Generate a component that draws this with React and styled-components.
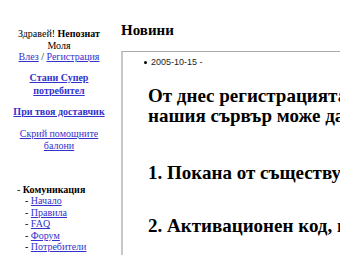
import React from "react";
import styled, { createGlobalStyle } from "styled-components";

const Global = createGlobalStyle`
  body {
    margin: 0;
    background: #fff;
    font-family: "Liberation Serif", "Times New Roman", serif;
    color: #000;
    overflow: hidden;
  }
`;

const Page = styled.div`
  display: flex;
  align-items: flex-start;
  width: 340px;
  height: 255px;
  overflow: hidden;
`;

const Side = styled.div`
  flex: 0 0 118px;
  padding-top: 28px;
  font-size: 10px;
  line-height: 11.5px;
  text-align: center;
`;

const Block = styled.div`
  margin-bottom: ${(p) => p.gap || 0}px;
  line-height: ${(p) => p.lh || 11.5}px;
`;

const Link = styled.a`
  color: #3333cc;
  text-decoration: underline;
  font-weight: ${(p) => (p.bold ? "bold" : "normal")};
`;

const Menu = styled.ul`
  list-style: none;
  margin: 33px 0 0 17px;
  padding: 0;
  text-align: left;
  line-height: 11.4px;
  li ul {
    list-style: none;
    margin: 0 0 0 8px;
    padding: 0;
  }
`;

const Main = styled.div`
  flex: 1;
  min-width: 0;
  padding: 22px 0 0 3px;
`;

const Title = styled.h1`
  margin: 0 0 13px 0;
  font-size: 15px;
  line-height: 16px;
  font-weight: bold;
`;

const Box = styled.div`
  border-top: 1px solid #aaa;
  border-left: 2px solid #c8c8c8;
  padding: 4px 0 0 21px;
  width: 400px;
  height: 220px;
`;

const NewsItem = styled.div`
  display: flex;
  align-items: center;
  gap: 4px;
  font-family: "Liberation Sans", Arial, sans-serif;
  font-size: 9px;
  line-height: 12px;
  color: #222;
  &::before {
    content: "";
    width: 3px;
    height: 3px;
    border-radius: 50%;
    background: #000;
  }
`;

const Heading = styled.h2`
  margin: ${(p) => p.top}px 0 0 4px;
  font-size: 19px;
  line-height: 20px;
  font-weight: bold;
  white-space: nowrap;
`;

export default function App() {
  return (
    <>
      <Global />
      <Page>
        <Side>
          <Block gap={8}>
            Здравей! <b>Непознат</b>
            <br />
            Моля
            <br />
            <Link href="#">Влез</Link> / <Link href="#">Регистрация</Link>
          </Block>
          <Block gap={9} lh={13}>
            <Link href="#" bold>
              Стани Супер
              <br />
              потребител
            </Link>
          </Block>
          <Block gap={11}>
            <Link href="#" bold>
              При твоя доставчик
            </Link>
          </Block>
          <Block>
            <Link href="#">
              Скрий помощните
              <br />
              балони
            </Link>
          </Block>
          <Menu>
            <li>
              - <b>Комуникация</b>
              <ul>
                <li>
                  - <Link href="#">Начало</Link>
                </li>
                <li>
                  - <Link href="#">Правила</Link>
                </li>
                <li>
                  - <Link href="#">FAQ</Link>
                </li>
                <li>
                  - <Link href="#">Форум</Link>
                </li>
                <li>
                  - <Link href="#">Потребители</Link>
                </li>
              </ul>
            </li>
          </Menu>
        </Side>
        <Main>
          <Title>Новини</Title>
          <Box>
            <NewsItem>2005-10-15 -</NewsItem>
            <Heading top={18}>
              От днес регистрацията в
              <br />
              нашия сървър може да стане
            </Heading>
            <Heading top={37}>1. Покана от съществуващ</Heading>
            <Heading top={33}>2. Активационен код, платен</Heading>
          </Box>
        </Main>
      </Page>
    </>
  );
}
